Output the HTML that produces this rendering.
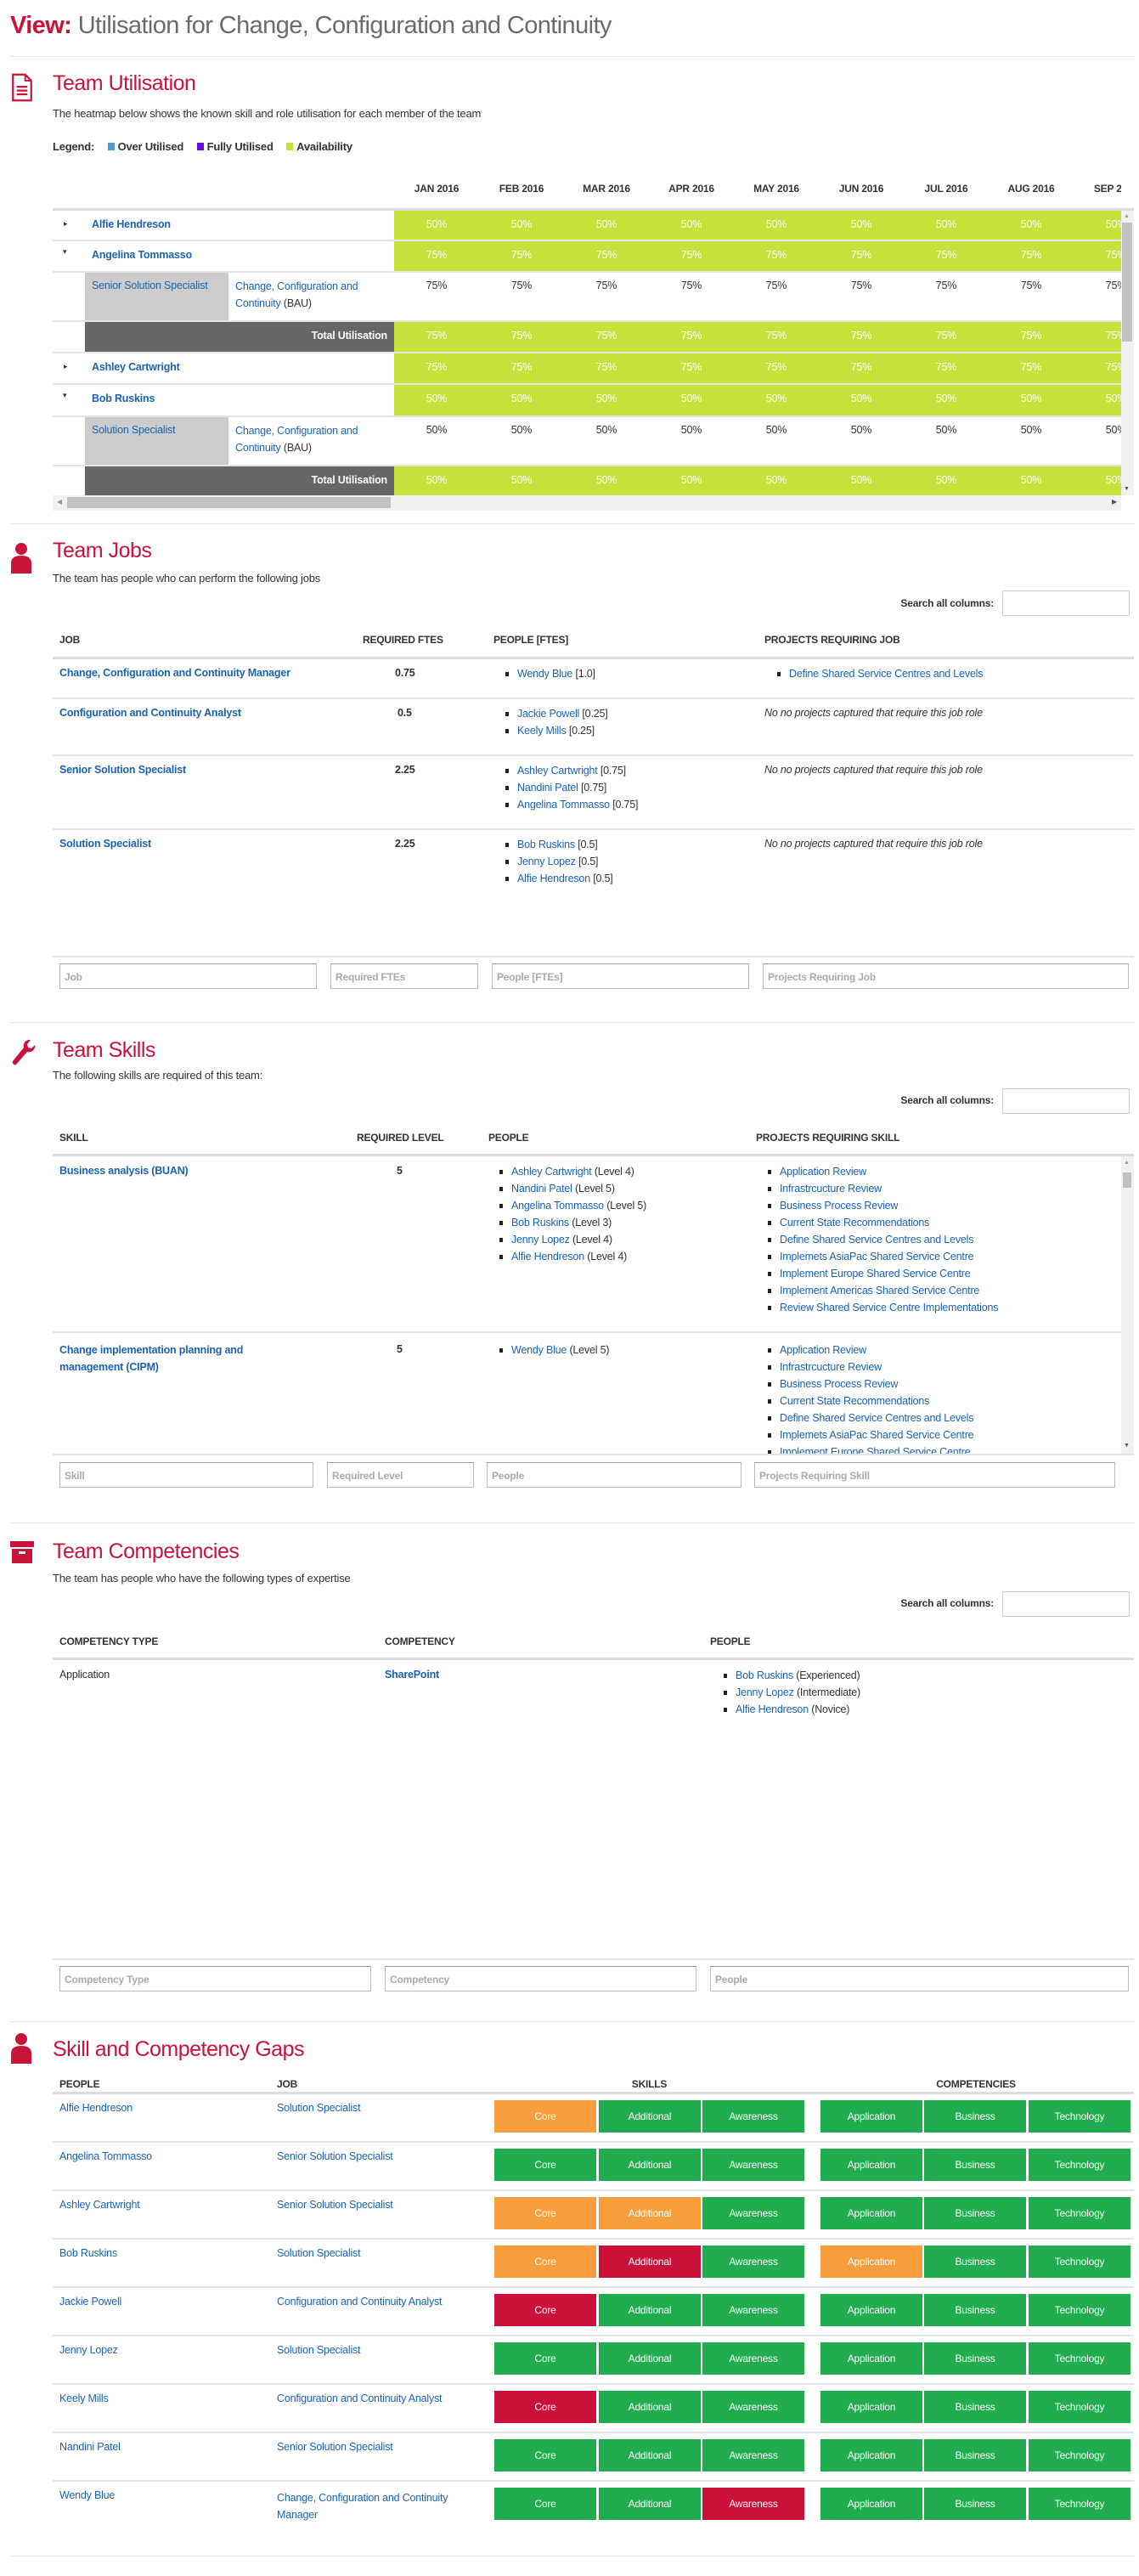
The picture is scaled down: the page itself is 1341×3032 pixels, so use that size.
<!DOCTYPE html>
<html><head><meta charset="utf-8">
<style>
*{margin:0;padding:0;box-sizing:border-box}
body{width:1341px;height:3032px;position:relative;background:#fff;font-family:"Liberation Sans",sans-serif;font-size:12.5px;color:#333;overflow:hidden;letter-spacing:-0.2px}
.a{position:absolute;white-space:nowrap}
.l{color:#1b63b0}
.b{font-weight:bold}
.hr{position:absolute;left:12px;width:1323px;height:1px;background:#e6e6e6}
.h2{position:absolute;left:62px;font-size:25px;color:#c8133a;letter-spacing:-0.5px}
.th{position:absolute;font-weight:bold;font-size:12px;text-transform:uppercase;color:#333}
.line3{position:absolute;left:62px;width:1273px;height:3px;background:#ddd}
.line1{position:absolute;left:62px;width:1273px;height:2px;background:#e4e4e4}
.inp{position:absolute;height:30px;border:1px solid #bbb;border-top-color:#999;color:#aaa;font-weight:bold;font-size:12px;padding:8px 5px;background:#fff}
.srch{position:absolute;width:150px;height:30px;border:1px solid #ccc;border-radius:2px}
ul{list-style:none}
li{position:relative;padding-left:14px;height:20px;line-height:16px}
li:before{content:"";position:absolute;left:0;top:6px;width:4px;height:5px;background:#222}
.hm{position:absolute;left:62px;width:1258px;overflow:hidden}
.gr{position:absolute;left:402px;width:856px;height:100%;background:#c8e03a}
.cells{position:absolute;left:402px;top:0;display:flex}
.cells span{display:block;width:100px;text-align:center}
.w span{color:#fff}
.cell{position:absolute;height:38px;width:120px;color:#fff;font-size:12px;text-align:center;line-height:38px}
.O{background:#f59e3b}.G{background:#21ad4f}.R{background:#c9113a}
</style></head><body>

<div class="a" style="left:12px;top:14px;font-size:29px;color:#6b6b6b;letter-spacing:-0.6px"><span style="color:#c8133a;font-weight:bold">View:</span> Utilisation for Change, Configuration and Continuity</div>
<div class="hr" style="top:66px"></div>

<!-- Team Utilisation -->
<svg class="a" style="left:12px;top:86px" width="28" height="34" viewBox="0 0 28 38"><path d="M2 2h16l8 8v26H2z" fill="none" stroke="#c8133a" stroke-width="2.5"/><path d="M18 2v8h8" fill="none" stroke="#c8133a" stroke-width="2"/><path d="M7 18h14M7 23h14M7 28h14" stroke="#c8133a" stroke-width="2.5"/></svg>
<div class="h2" style="top:84px">Team Utilisation</div>
<div class="a" style="left:62px;top:126px;font-size:13px">The heatmap below shows the known skill and role utilisation for each member of the team</div>
<div class="a b" style="left:62px;top:165px;font-size:13px">Legend: <span style="display:inline-block;width:8px;height:9px;background:#4a9ad8;margin:0 4px 0 12px"></span>Over Utilised <span style="display:inline-block;width:8px;height:9px;background:#6a0ddb;margin:0 4px 0 12px"></span>Fully Utilised <span style="display:inline-block;width:8px;height:9px;background:#c8e03a;margin:0 4px 0 12px"></span>Availability</div>

<div class="hm" style="top:215px;height:20px">
 <div class="cells b" style="font-size:12px"><span>JAN 2016</span><span>FEB 2016</span><span>MAR 2016</span><span>APR 2016</span><span>MAY 2016</span><span>JUN 2016</span><span>JUL 2016</span><span>AUG 2016</span><span>SEP 2016</span></div>
</div>
<div class="line3" style="top:245px"></div>

<div class="hm" style="top:248px;height:34px"><div class="gr"></div><div class="a" style="left:13px;top:10px;font-size:9px">&#9656;</div><div class="a l b" style="left:46px;top:9px">Alfie Hendreson</div><div class="cells w" style="top:9px"><span>50%</span><span>50%</span><span>50%</span><span>50%</span><span>50%</span><span>50%</span><span>50%</span><span>50%</span><span>50%</span></div></div>
<div class="line1" style="top:282px"></div>
<div class="hm" style="top:284px;height:35px"><div class="gr"></div><div class="a" style="left:12px;top:7px;font-size:9px">&#9662;</div><div class="a l b" style="left:46px;top:9px">Angelina Tommasso</div><div class="cells w" style="top:9px"><span>75%</span><span>75%</span><span>75%</span><span>75%</span><span>75%</span><span>75%</span><span>75%</span><span>75%</span><span>75%</span></div></div>
<div class="line1" style="top:319px"></div>
<div class="hm" style="top:321px;height:56px"><div class="a" style="left:38px;top:0;width:169px;height:56px;background:#ccc"></div><div class="a l" style="left:46px;top:8px">Senior Solution Specialist</div><div class="a" style="left:215px;top:6px;line-height:20px"><span class="l">Change, Configuration and<br>Continuity</span> (BAU)</div><div class="cells" style="top:8px"><span>75%</span><span>75%</span><span>75%</span><span>75%</span><span>75%</span><span>75%</span><span>75%</span><span>75%</span><span>75%</span></div></div>
<div class="line1" style="top:377px"></div>
<div class="hm" style="top:379px;height:35px"><div class="a" style="left:38px;top:0;width:364px;height:35px;background:#666"></div><div class="gr"></div><div class="a b" style="left:200px;width:194px;text-align:right;top:9px;color:#fff">Total Utilisation</div><div class="cells w" style="top:9px"><span>75%</span><span>75%</span><span>75%</span><span>75%</span><span>75%</span><span>75%</span><span>75%</span><span>75%</span><span>75%</span></div></div>
<div class="line1" style="top:414px"></div>
<div class="hm" style="top:416px;height:35px"><div class="gr"></div><div class="a" style="left:13px;top:10px;font-size:9px">&#9656;</div><div class="a l b" style="left:46px;top:9px">Ashley Cartwright</div><div class="cells w" style="top:9px"><span>75%</span><span>75%</span><span>75%</span><span>75%</span><span>75%</span><span>75%</span><span>75%</span><span>75%</span><span>75%</span></div></div>
<div class="line1" style="top:451px"></div>
<div class="hm" style="top:453px;height:36px"><div class="gr"></div><div class="a" style="left:12px;top:7px;font-size:9px">&#9662;</div><div class="a l b" style="left:46px;top:9px">Bob Ruskins</div><div class="cells w" style="top:9px"><span>50%</span><span>50%</span><span>50%</span><span>50%</span><span>50%</span><span>50%</span><span>50%</span><span>50%</span><span>50%</span></div></div>
<div class="line1" style="top:489px"></div>
<div class="hm" style="top:491px;height:56px"><div class="a" style="left:38px;top:0;width:169px;height:56px;background:#ccc"></div><div class="a l" style="left:46px;top:8px">Solution Specialist</div><div class="a" style="left:215px;top:6px;line-height:20px"><span class="l">Change, Configuration and<br>Continuity</span> (BAU)</div><div class="cells" style="top:8px"><span>50%</span><span>50%</span><span>50%</span><span>50%</span><span>50%</span><span>50%</span><span>50%</span><span>50%</span><span>50%</span></div></div>
<div class="line1" style="top:547px"></div>
<div class="hm" style="top:549px;height:34px"><div class="a" style="left:38px;top:0;width:364px;height:34px;background:#666"></div><div class="gr"></div><div class="a b" style="left:200px;width:194px;text-align:right;top:9px;color:#fff">Total Utilisation</div><div class="cells w" style="top:9px"><span>50%</span><span>50%</span><span>50%</span><span>50%</span><span>50%</span><span>50%</span><span>50%</span><span>50%</span><span>50%</span></div></div>
<!-- scrollbars -->
<div class="a" style="left:1320px;top:248px;width:15px;height:335px;background:#f1f1f1"></div>
<div class="a" style="left:1323px;top:251px;font-size:7px;color:#999">&#9650;</div>
<div class="a" style="left:1321px;top:262px;width:12px;height:140px;background:#c1c1c1"></div>
<div class="a" style="left:1323px;top:572px;font-size:7px;color:#555">&#9660;</div>
<div class="a" style="left:62px;top:583px;width:1258px;height:18px;background:#f1f1f1"></div>
<div class="a" style="left:79px;top:585px;width:381px;height:13px;background:#c1c1c1"></div>
<div class="a" style="left:67px;top:586px;font-size:8px;color:#999">&#9664;</div>
<div class="a" style="left:1309px;top:586px;font-size:8px;color:#555">&#9654;</div>

<div class="hr" style="top:616px"></div>

<!-- Team Jobs -->
<svg class="a" style="left:12px;top:637px" width="26" height="38" viewBox="0 0 26 38"><circle cx="13" cy="9" r="7" fill="#c8133a"/><path d="M1 38v-12q0-9 12-9q12 0 12 9v12z" fill="#c8133a"/></svg>
<div class="h2" style="top:634px">Team Jobs</div>
<div class="a" style="left:62px;top:673px;font-size:13px">The team has people who can perform the following jobs</div>
<div class="a b" style="left:1050px;top:703px;width:120px;text-align:right;font-size:12px">Search all columns:</div>
<div class="srch" style="left:1180px;top:695px"></div>
<div class="th" style="left:70px;top:746px">Job</div>
<div class="th" style="left:427px;top:746px">Required FTEs</div>
<div class="th" style="left:581px;top:746px">People [FTEs]</div>
<div class="th" style="left:900px;top:746px">Projects Requiring Job</div>
<div class="line3" style="top:773px"></div>
<div class="a l b" style="left:70px;top:785px">Change, Configuration and Continuity Manager</div>
<div class="a b" style="left:465px;top:785px">0.75</div>
<ul class="a" style="left:595px;top:785px"><li><span class="l">Wendy Blue</span> [1.0]</li></ul>
<ul class="a" style="left:915px;top:785px"><li><span class="l">Define Shared Service Centres and Levels</span></li></ul>
<div class="line1" style="top:821px"></div>
<div class="a l b" style="left:70px;top:832px">Configuration and Continuity Analyst</div>
<div class="a b" style="left:468px;top:832px">0.5</div>
<ul class="a" style="left:595px;top:832px"><li><span class="l">Jackie Powell</span> [0.25]</li><li><span class="l">Keely Mills</span> [0.25]</li></ul>
<div class="a" style="left:900px;top:832px;font-style:italic">No no projects captured that require this job role</div>
<div class="line1" style="top:888px"></div>
<div class="a l b" style="left:70px;top:899px">Senior Solution Specialist</div>
<div class="a b" style="left:465px;top:899px">2.25</div>
<ul class="a" style="left:595px;top:899px"><li><span class="l">Ashley Cartwright</span> [0.75]</li><li><span class="l">Nandini Patel</span> [0.75]</li><li><span class="l">Angelina Tommasso</span> [0.75]</li></ul>
<div class="a" style="left:900px;top:899px;font-style:italic">No no projects captured that require this job role</div>
<div class="line1" style="top:975px"></div>
<div class="a l b" style="left:70px;top:986px">Solution Specialist</div>
<div class="a b" style="left:465px;top:986px">2.25</div>
<ul class="a" style="left:595px;top:986px"><li><span class="l">Bob Ruskins</span> [0.5]</li><li><span class="l">Jenny Lopez</span> [0.5]</li><li><span class="l">Alfie Hendreson</span> [0.5]</li></ul>
<div class="a" style="left:900px;top:986px;font-style:italic">No no projects captured that require this job role</div>
<div class="line1" style="top:1125px"></div>
<div class="inp" style="left:70px;top:1134px;width:303px">Job</div>
<div class="inp" style="left:389px;top:1134px;width:174px">Required FTEs</div>
<div class="inp" style="left:579px;top:1134px;width:303px">People [FTEs]</div>
<div class="inp" style="left:898px;top:1134px;width:431px">Projects Requiring Job</div>

<div class="hr" style="top:1203px"></div>

<!-- Team Skills -->
<svg class="a" style="left:12px;top:1222px" width="30" height="32" viewBox="0 0 30 32"><path d="M24 2a7 7 0 0 0-8 9L3 27a3 3 0 0 0 4 4L20 16a7 7 0 0 0 9-8l-4 4-4-1-1-4z" fill="#c8133a"/></svg>
<div class="h2" style="top:1222px">Team Skills</div>
<div class="a" style="left:62px;top:1258px;font-size:13px">The following skills are required of this team:</div>
<div class="a b" style="left:1050px;top:1288px;width:120px;text-align:right;font-size:12px">Search all columns:</div>
<div class="srch" style="left:1180px;top:1281px"></div>
<div class="th" style="left:70px;top:1332px">Skill</div>
<div class="th" style="left:420px;top:1332px">Required Level</div>
<div class="th" style="left:575px;top:1332px">People</div>
<div class="th" style="left:890px;top:1332px">Projects Requiring Skill</div>
<div class="line3" style="top:1358px"></div>
<div class="a" style="left:62px;top:1361px;width:1273px;height:350px;overflow:hidden">
 <div class="a l b" style="left:8px;top:10px">Business analysis (BUAN)</div>
 <div class="a b" style="left:405px;top:10px">5</div>
 <ul class="a" style="left:526px;top:10px"><li><span class="l">Ashley Cartwright</span> (Level 4)</li><li><span class="l">Nandini Patel</span> (Level 5)</li><li><span class="l">Angelina Tommasso</span> (Level 5)</li><li><span class="l">Bob Ruskins</span> (Level 3)</li><li><span class="l">Jenny Lopez</span> (Level 4)</li><li><span class="l">Alfie Hendreson</span> (Level 4)</li></ul>
 <ul class="a l" style="left:842px;top:10px"><li>Application Review</li><li>Infrastrcucture Review</li><li>Business Process Review</li><li>Current State Recommendations</li><li>Define Shared Service Centres and Levels</li><li>Implemets AsiaPac Shared Service Centre</li><li>Implement Europe Shared Service Centre</li><li>Implement Americas Shared Service Centre</li><li>Review Shared Service Centre Implementations</li></ul>
 <div class="a" style="left:0;top:206px;width:1258px;height:2px;background:#e4e4e4"></div>
 <div class="a l b" style="left:8px;top:218px;line-height:20px">Change implementation planning and<br>management (CIPM)</div>
 <div class="a b" style="left:405px;top:220px">5</div>
 <ul class="a" style="left:526px;top:220px"><li><span class="l">Wendy Blue</span> (Level 5)</li></ul>
 <ul class="a l" style="left:842px;top:220px"><li>Application Review</li><li>Infrastrcucture Review</li><li>Business Process Review</li><li>Current State Recommendations</li><li>Define Shared Service Centres and Levels</li><li>Implemets AsiaPac Shared Service Centre</li><li>Implement Europe Shared Service Centre</li></ul>
 <div class="a" style="left:1258px;top:0;width:15px;height:350px;background:#f1f1f1"></div>
 <div class="a" style="left:1260px;top:19px;width:10px;height:18px;background:#c1c1c1"></div>
 <div class="a" style="left:1261px;top:4px;font-size:7px;color:#999">&#9650;</div>
 <div class="a" style="left:1261px;top:337px;font-size:7px;color:#555">&#9660;</div>
</div>
<div class="line1" style="top:1711px"></div>
<div class="inp" style="left:70px;top:1721px;width:299px">Skill</div>
<div class="inp" style="left:385px;top:1721px;width:173px">Required Level</div>
<div class="inp" style="left:573px;top:1721px;width:300px">People</div>
<div class="inp" style="left:888px;top:1721px;width:425px">Projects Requiring Skill</div>

<div class="hr" style="top:1792px"></div>

<!-- Team Competencies -->
<svg class="a" style="left:12px;top:1814px" width="28" height="26" viewBox="0 0 28 26"><rect x="0" y="0" width="28" height="7" fill="#c8133a"/><rect x="2" y="9" width="24" height="17" fill="#c8133a"/><rect x="10" y="12" width="8" height="3" fill="#fff"/></svg>
<div class="h2" style="top:1812px">Team Competencies</div>
<div class="a" style="left:62px;top:1850px;font-size:13px">The team has people who have the following types of expertise</div>
<div class="a b" style="left:1050px;top:1880px;width:120px;text-align:right;font-size:12px">Search all columns:</div>
<div class="srch" style="left:1180px;top:1873px"></div>
<div class="th" style="left:70px;top:1925px">Competency Type</div>
<div class="th" style="left:453px;top:1925px">Competency</div>
<div class="th" style="left:836px;top:1925px">People</div>
<div class="line3" style="top:1951px"></div>
<div class="a" style="left:70px;top:1964px">Application</div>
<div class="a l b" style="left:453px;top:1964px">SharePoint</div>
<ul class="a" style="left:852px;top:1964px"><li><span class="l">Bob Ruskins</span> (Experienced)</li><li><span class="l">Jenny Lopez</span> (Intermediate)</li><li><span class="l">Alfie Hendreson</span> (Novice)</li></ul>
<div class="line1" style="top:2305px"></div>
<div class="inp" style="left:70px;top:2314px;width:367px">Competency Type</div>
<div class="inp" style="left:453px;top:2314px;width:367px">Competency</div>
<div class="inp" style="left:836px;top:2314px;width:493px">People</div>

<div class="hr" style="top:2379px"></div>

<!-- Gaps -->
<svg class="a" style="left:12px;top:2391px" width="26" height="38" viewBox="0 0 26 38"><circle cx="13" cy="9" r="7" fill="#c8133a"/><path d="M1 38v-12q0-9 12-9q12 0 12 9v12z" fill="#c8133a"/></svg>
<div class="h2" style="top:2398px">Skill and Competency Gaps</div>
<div class="th" style="left:70px;top:2446px">People</div>
<div class="th" style="left:326px;top:2446px">Job</div>
<div class="th" style="left:582px;top:2446px;width:365px;text-align:center">Skills</div>
<div class="th" style="left:966px;top:2446px;width:366px;text-align:center">Competencies</div>
<div class="line3" style="top:2462px"></div>

<div class="a" style="left:0;top:2465px;width:1341px">
<div class="a" style="top:0;left:0;width:1341px;height:57px"><div class="a l" style="left:70px;top:9px">Alfie Hendreson</div><div class="a l" style="left:326px;top:9px">Solution Specialist</div><div class="cell O" style="left:582px;top:7px">Core</div><div class="cell G" style="left:705px;top:7px">Additional</div><div class="cell G" style="left:827px;top:7px">Awareness</div><div class="cell G" style="left:966px;top:7px">Application</div><div class="cell G" style="left:1088px;top:7px">Business</div><div class="cell G" style="left:1211px;top:7px">Technology</div><div class="a" style="left:62px;top:55px;width:1273px;height:2px;background:#e4e4e4"></div></div>
<div class="a" style="top:57px;left:0;width:1341px;height:57px"><div class="a l" style="left:70px;top:9px">Angelina Tommasso</div><div class="a l" style="left:326px;top:9px">Senior Solution Specialist</div><div class="cell G" style="left:582px;top:7px">Core</div><div class="cell G" style="left:705px;top:7px">Additional</div><div class="cell G" style="left:827px;top:7px">Awareness</div><div class="cell G" style="left:966px;top:7px">Application</div><div class="cell G" style="left:1088px;top:7px">Business</div><div class="cell G" style="left:1211px;top:7px">Technology</div><div class="a" style="left:62px;top:55px;width:1273px;height:2px;background:#e4e4e4"></div></div>
<div class="a" style="top:114px;left:0;width:1341px;height:57px"><div class="a l" style="left:70px;top:9px">Ashley Cartwright</div><div class="a l" style="left:326px;top:9px">Senior Solution Specialist</div><div class="cell O" style="left:582px;top:7px">Core</div><div class="cell O" style="left:705px;top:7px">Additional</div><div class="cell G" style="left:827px;top:7px">Awareness</div><div class="cell G" style="left:966px;top:7px">Application</div><div class="cell G" style="left:1088px;top:7px">Business</div><div class="cell G" style="left:1211px;top:7px">Technology</div><div class="a" style="left:62px;top:55px;width:1273px;height:2px;background:#e4e4e4"></div></div>
<div class="a" style="top:171px;left:0;width:1341px;height:57px"><div class="a l" style="left:70px;top:9px">Bob Ruskins</div><div class="a l" style="left:326px;top:9px">Solution Specialist</div><div class="cell O" style="left:582px;top:7px">Core</div><div class="cell R" style="left:705px;top:7px">Additional</div><div class="cell G" style="left:827px;top:7px">Awareness</div><div class="cell O" style="left:966px;top:7px">Application</div><div class="cell G" style="left:1088px;top:7px">Business</div><div class="cell G" style="left:1211px;top:7px">Technology</div><div class="a" style="left:62px;top:55px;width:1273px;height:2px;background:#e4e4e4"></div></div>
<div class="a" style="top:228px;left:0;width:1341px;height:57px"><div class="a l" style="left:70px;top:9px">Jackie Powell</div><div class="a l" style="left:326px;top:9px">Configuration and Continuity Analyst</div><div class="cell R" style="left:582px;top:7px">Core</div><div class="cell G" style="left:705px;top:7px">Additional</div><div class="cell G" style="left:827px;top:7px">Awareness</div><div class="cell G" style="left:966px;top:7px">Application</div><div class="cell G" style="left:1088px;top:7px">Business</div><div class="cell G" style="left:1211px;top:7px">Technology</div><div class="a" style="left:62px;top:55px;width:1273px;height:2px;background:#e4e4e4"></div></div>
<div class="a" style="top:285px;left:0;width:1341px;height:57px"><div class="a l" style="left:70px;top:9px">Jenny Lopez</div><div class="a l" style="left:326px;top:9px">Solution Specialist</div><div class="cell G" style="left:582px;top:7px">Core</div><div class="cell G" style="left:705px;top:7px">Additional</div><div class="cell G" style="left:827px;top:7px">Awareness</div><div class="cell G" style="left:966px;top:7px">Application</div><div class="cell G" style="left:1088px;top:7px">Business</div><div class="cell G" style="left:1211px;top:7px">Technology</div><div class="a" style="left:62px;top:55px;width:1273px;height:2px;background:#e4e4e4"></div></div>
<div class="a" style="top:342px;left:0;width:1341px;height:57px"><div class="a l" style="left:70px;top:9px">Keely Mills</div><div class="a l" style="left:326px;top:9px">Configuration and Continuity Analyst</div><div class="cell R" style="left:582px;top:7px">Core</div><div class="cell G" style="left:705px;top:7px">Additional</div><div class="cell G" style="left:827px;top:7px">Awareness</div><div class="cell G" style="left:966px;top:7px">Application</div><div class="cell G" style="left:1088px;top:7px">Business</div><div class="cell G" style="left:1211px;top:7px">Technology</div><div class="a" style="left:62px;top:55px;width:1273px;height:2px;background:#e4e4e4"></div></div>
<div class="a" style="top:399px;left:0;width:1341px;height:57px"><div class="a l" style="left:70px;top:9px">Nandini Patel</div><div class="a l" style="left:326px;top:9px">Senior Solution Specialist</div><div class="cell G" style="left:582px;top:7px">Core</div><div class="cell G" style="left:705px;top:7px">Additional</div><div class="cell G" style="left:827px;top:7px">Awareness</div><div class="cell G" style="left:966px;top:7px">Application</div><div class="cell G" style="left:1088px;top:7px">Business</div><div class="cell G" style="left:1211px;top:7px">Technology</div><div class="a" style="left:62px;top:55px;width:1273px;height:2px;background:#e4e4e4"></div></div>
<div class="a" style="top:456px;left:0;width:1341px;height:57px"><div class="a l" style="left:70px;top:9px">Wendy Blue</div><div class="a l" style="left:326px;top:9px;line-height:20px">Change, Configuration and Continuity<br>Manager</div><div class="cell G" style="left:582px;top:7px">Core</div><div class="cell G" style="left:705px;top:7px">Additional</div><div class="cell R" style="left:827px;top:7px">Awareness</div><div class="cell G" style="left:966px;top:7px">Application</div><div class="cell G" style="left:1088px;top:7px">Business</div><div class="cell G" style="left:1211px;top:7px">Technology</div></div>
</div>
<div class="hr" style="top:3008px"></div>
</body></html>
